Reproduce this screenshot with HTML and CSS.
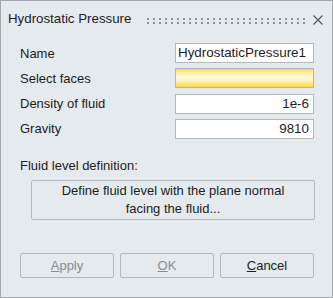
FILE: index.html
```html
<!DOCTYPE html>
<html lang="en">
<head>
  <meta charset="UTF-8" />
  <title>Hydrostatic Pressure</title>
  <link rel="stylesheet" href="styles.css">
</head>
<body>
  <div class="dialog">
    <div class="titlebar">
      <span class="title">Hydrostatic Pressure</span>
      <svg class="grip" width="158" height="6" viewBox="0 0 158 6">
        <defs>
          <pattern id="dots" width="6" height="4" patternUnits="userSpaceOnUse">
            <rect width="2" height="2" fill="#8e9296"/>
          </pattern>
        </defs>
        <rect width="158" height="6" fill="url(#dots)"/>
      </svg>
      <svg class="close" width="10" height="10" viewBox="0 0 10 10">
        <path d="M0.5 0.5 L9.5 9.5 M9.5 0.5 L0.5 9.5" stroke="#55595d" stroke-width="1.2"/>
      </svg>
    </div>

    <div class="content">
      <div class="fields">
        <label>Name</label>
        <div class="field">HydrostaticPressure1</div>
        <label>Select faces</label>
        <div class="field picker"></div>
        <label>Density of fluid</label>
        <div class="field num">1e-6</div>
        <label>Gravity</label>
        <div class="field num">9810</div>
      </div>

      <div class="section">Fluid level definition:</div>
      <button class="btn wide">Define fluid level with the plane normal<br>facing the fluid...</button>

      <div class="actions">
        <button class="btn disabled"><u>A</u>pply</button>
        <button class="btn disabled"><u>O</u>K</button>
        <button class="btn"><u>C</u>ancel</button>
      </div>
    </div>
  </div>
</body>
</html>
```

FILE: styles.css
```css
body {
  margin: 0;
  font-family: "Liberation Sans", Arial, sans-serif;
  font-size: 13px;
  color: #1c1c1c;
}
.dialog {
  width: 333px;
  height: 298px;
  box-sizing: border-box;
  border: 1px solid #a3a8ad;
  background: #e4eaee;
}
.titlebar {
  display: flex;
  align-items: center;
  height: 36px;
  padding: 0 9px 0 7px;
}
.title {
  font-size: 13.3px;
  margin-top: -1px;
}
.grip {
  margin-left: 16px;
  margin-top: 4px;
}
.close {
  margin-left: auto;
  margin-top: 1px;
}
.content {
  padding: 6px 18px 0 19px;
}
.fields {
  display: grid;
  grid-template-columns: 155px 1fr;
  grid-auto-rows: 20px;
  row-gap: 5.33px;
  align-items: center;
}
.field {
  height: 20px;
  box-sizing: border-box;
  border: 1px solid #b2b7bc;
  background: #fff;
  padding: 0 4px 0 2px;
  font-size: 13.4px;
  line-height: 18px;
  white-space: nowrap;
  overflow: hidden;
}
.field.num {
  text-align: right;
}
.picker {
  background: linear-gradient(#ffd63a 0%, #fff2b8 25%, #fff8d8 45%, #fff3bd 65%, #ffd83f 100%);
}
.section {
  margin-top: 19px;
  line-height: 16px;
}
.btn {
  font-family: inherit;
  font-size: 13px;
  color: #1c1c1c;
  background: #e4eaee;
  border: 1px solid #b3b7bb;
  border-radius: 2px;
  padding: 0;
  box-sizing: border-box;
}
.wide {
  display: block;
  width: 284px;
  height: 40px;
  margin: 6px 0 0 11px;
  line-height: 18px;
}
.actions {
  display: grid;
  grid-template-columns: repeat(3, 1fr);
  column-gap: 6px;
  margin-top: 33px;
}
.actions .btn {
  height: 25px;
}
.disabled {
  color: #8a8d90;
}
```
